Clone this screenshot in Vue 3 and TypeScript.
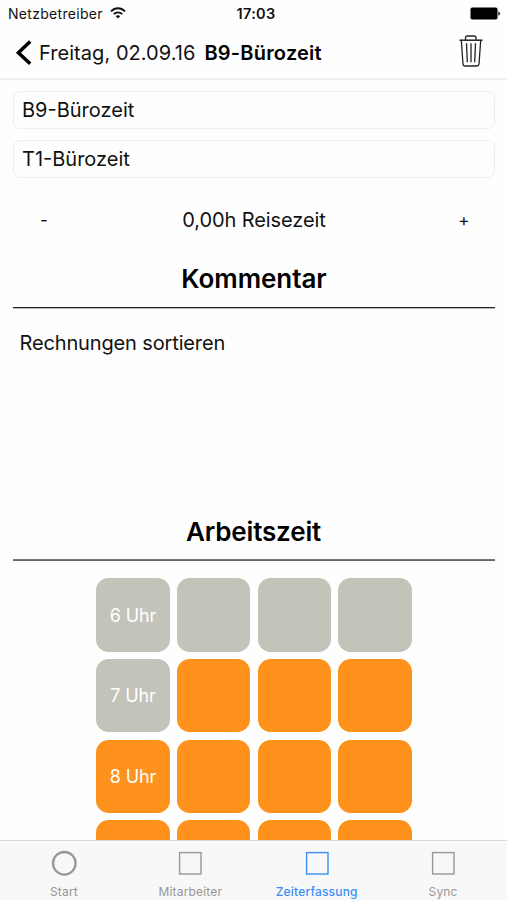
<script setup lang="ts">
import { computed, ref } from 'vue'

interface HourRow {
  label: string
  quarters: boolean[]
}

interface Tab {
  label: string
  shape: 'circle' | 'square'
}

// The last row peeks out above the tab bar and carries no label of its own.
const rows = ref<HourRow[]>([
  { label: '6 Uhr', quarters: [false, false, false, false] },
  { label: '7 Uhr', quarters: [false, true, true, true] },
  { label: '8 Uhr', quarters: [true, true, true, true] },
  { label: '', quarters: [true, true, true, true] },
])

const tabs: Tab[] = [
  { label: 'Start', shape: 'circle' },
  { label: 'Mitarbeiter', shape: 'square' },
  { label: 'Zeiterfassung', shape: 'square' },
  { label: 'Sync', shape: 'square' },
]
const activeTab = ref('Zeiterfassung')

const travel = ref(0)
const travelLabel = computed(() => `${travel.value.toFixed(2).replace('.', ',')}h Reisezeit`)

function changeTravel(step: number) {
  travel.value = Math.max(0, travel.value + step)
}

function toggle(row: HourRow, index: number) {
  row.quarters[index] = !row.quarters[index]
}
</script>

<template>
  <div class="screen">
    <div class="status">
      <div class="carrier">
        <span class="carrier-name">Netzbetreiber</span>
        <svg class="wifi" width="16" height="12" viewBox="0 0 16 12" fill="none" stroke="#111" stroke-width="1.8">
          <path d="M1 4.4C5 .2 11 .2 15 4.4" />
          <path d="M3.7 7.2c2.5-2.5 6.1-2.5 8.6 0" />
          <path d="M8 11.6 5.7 9.2c1.3-1.3 3.3-1.3 4.6 0z" fill="#111" stroke="none" />
        </svg>
      </div>
      <span class="clock">17:03</span>
      <svg class="battery" width="31" height="13" viewBox="0 0 31 13">
        <rect x=".5" y=".5" width="27" height="12" rx="1.8" />
        <path d="M28.4 4.4c1.9.5 1.9 3.7 0 4.2z" />
      </svg>
    </div>

    <header class="nav">
      <svg class="back" width="18" height="28" viewBox="0 0 18 28" fill="none" stroke="#000" stroke-width="3.5">
        <path d="M16.2 2.6 4.4 13.7l11.8 11.1" />
      </svg>
      <span class="date">Freitag, 02.09.16</span>
      <h1 class="title">B9-Bürozeit</h1>
      <svg class="trash" width="24" height="32" viewBox="0 0 24 32" fill="none" stroke="#222" stroke-width="1.3">
        <path d="M.5 5.2h23" stroke-width="1.5" />
        <path d="M6.5 5V3q0-2 2-2h6.5q2 0 2 2v2" />
        <path d="M2.3 5.5 4 29q.2 2 2.2 2h11.6q2 0 2.2-2l1.7-23.5" />
        <path d="m7.5 8.3.8 19M12 8.3v19M16.5 8.3l-.8 19" />
      </svg>
    </header>

    <main class="content">
      <div class="field">B9-Bürozeit</div>
      <div class="field">T1-Bürozeit</div>

      <div class="stepper">
        <button class="step" @click="changeTravel(-0.25)">-</button>
        <span class="travel">{{ travelLabel }}</span>
        <button class="step" @click="changeTravel(0.25)">+</button>
      </div>

      <h2 class="heading">Kommentar</h2>
      <div class="comment">Rechnungen sortieren</div>

      <h2 class="heading hours">Arbeitszeit</h2>
      <div class="grid">
        <template v-for="(row, r) in rows" :key="r">
          <div
            v-for="(booked, i) in row.quarters"
            :key="i"
            class="cell"
            :class="{ booked }"
            @click="toggle(row, i)"
          >
            <span v-if="i === 0 && row.label">{{ row.label }}</span>
          </div>
        </template>
      </div>
    </main>

    <nav class="tabs">
      <div
        v-for="tab in tabs"
        :key="tab.label"
        class="tab"
        :class="{ active: tab.label === activeTab }"
        @click="activeTab = tab.label"
      >
        <svg class="shape" width="26" height="26" viewBox="0 0 26 26" fill="none" stroke="currentColor">
          <circle v-if="tab.shape === 'circle'" cx="13.3" cy="13.3" r="11.3" stroke-width="2.3" />
          <rect v-else x="2.6" y="2.6" width="21.4" height="21.4" stroke-width="1.4" />
        </svg>
        <span class="tab-label">{{ tab.label }}</span>
      </div>
    </nav>
  </div>
</template>

<style>
body {
  margin: 0;
  background: #fff;
}
</style>

<style scoped>
.screen {
  display: flex;
  flex-direction: column;
  width: 507px;
  height: 900px;
  overflow: hidden;
  background: #fefefe;
  color: #111;
  font-family: Inter, "Liberation Sans", sans-serif;
  font-size: 20px;
  white-space: nowrap;
}
.status {
  display: grid;
  grid-template-columns: 1fr auto 1fr;
  align-items: center;
  height: 27px;
  flex: none;
  padding: 0 6px 0 8px;
  box-sizing: border-box;
}
.carrier {
  display: flex;
  align-items: center;
  gap: 7px;
}
.carrier-name {
  font-size: 14px;
  letter-spacing: 0.3px;
}
.wifi {
  margin-top: -2px;
}
.clock {
  padding-left: 3px;
  font-size: 14.5px;
  font-weight: 600;
  letter-spacing: 0.3px;
}
.battery {
  justify-self: end;
}
.nav {
  display: flex;
  align-items: center;
  height: 53px;
  flex: none;
  box-sizing: border-box;
  padding: 0 24px 0 14px;
  border-bottom: 2px solid #efefef;
}
.back {
  margin-right: 7px;
}
.date {
  letter-spacing: 0.05px;
}
.title {
  margin: 0 0 0 9px;
  font-size: 20px;
  font-weight: 600;
  letter-spacing: 0.2px;
  color: #000;
}
.trash {
  margin-left: auto;
  margin-top: -4px;
}
.content {
  flex: 1;
  min-height: 0;
  overflow: hidden;
  padding: 11px 12px 0 13px;
}
.field {
  display: flex;
  align-items: center;
  height: 38px;
  box-sizing: border-box;
  margin-bottom: 11px;
  padding: 0 8px 1px;
  border: 1.5px solid #eee;
  border-radius: 7px;
}
.stepper {
  display: flex;
  align-items: center;
  justify-content: space-between;
  height: 62px;
  padding: 0 22px;
}
.travel {
  margin-top: -1px;
  letter-spacing: -0.1px;
}
.step {
  width: 18px;
  padding: 0;
  border: 0;
  background: none;
  color: #111;
  font: inherit;
  font-size: 17px;
}
.heading {
  display: flex;
  justify-content: center;
  height: 57px;
  box-sizing: border-box;
  margin: 0;
  padding-top: 10px;
  border-bottom: 1px solid #222;
  box-shadow: 0 1px #bbb;
  color: #000;
  font-size: 26px;
  line-height: 36px;
  font-weight: 600;
  letter-spacing: -0.05px;
}
.heading.hours {
  padding-right: 1px;
  border-bottom-color: #666;
  box-shadow: 0 -1px #777 inset;
  letter-spacing: -0.15px;
}
.comment {
  height: 196px;
  box-sizing: border-box;
  padding: 23px 6.5px 0;
  line-height: 24px;
  letter-spacing: -0.14px;
}
.grid {
  display: grid;
  grid-template-columns: repeat(4, 73.3px);
  grid-auto-rows: 73.3px;
  gap: 7.4px;
  justify-content: center;
  padding-top: 17.4px;
}
.cell {
  display: flex;
  align-items: center;
  justify-content: center;
  border-radius: 12.5px;
  background: #c3c3b9;
  color: #fff;
  font-size: 18px;
  letter-spacing: -0.1px;
}
.cell.booked {
  background: #ff921c;
}
.tabs {
  display: grid;
  grid-template-columns: repeat(4, 126.4px);
  justify-content: center;
  height: 60px;
  flex: none;
  box-sizing: border-box;
  border-top: 1px solid #d8d8d8;
  background: #f8f8f8;
}
.tab {
  display: flex;
  flex-direction: column;
  align-items: center;
  color: #979797;
}
.tab.active {
  color: #3a8ff5;
}
.shape {
  display: block;
  margin: 9px 0;
}
.tab-label {
  font-size: 12px;
  line-height: 14px;
  letter-spacing: 0.18px;
}
.active .tab-label {
  font-weight: 500;
}
</style>
